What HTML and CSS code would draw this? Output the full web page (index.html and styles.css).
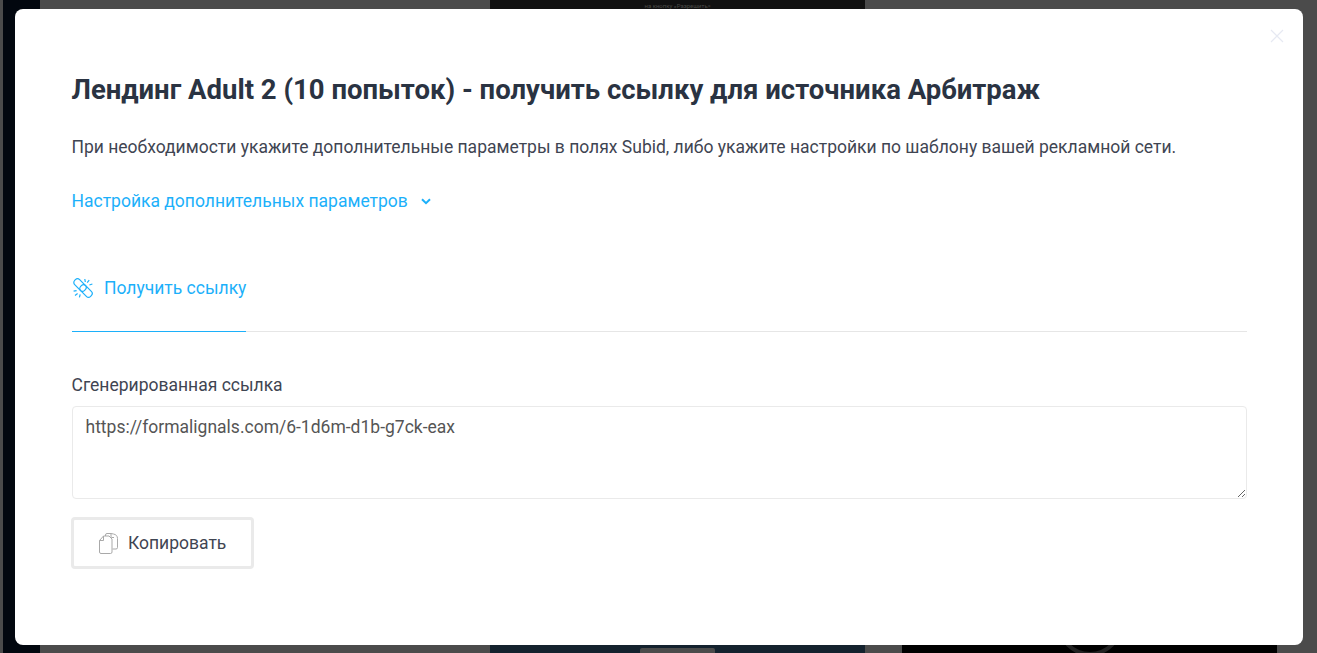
FILE: index.html
```html
<!DOCTYPE html>
<html lang="ru">
<head>
  <meta charset="UTF-8">
  <meta name="viewport" content="width=device-width, initial-scale=1.0">
  <title>Получить ссылку</title>

  <link rel="stylesheet" href="styles.css">
</head>

<body>
  <!-- Page behind the modal, only its edges are visible -->
  <div class="backdrop">
    <div class="backdrop-col col-edge"></div>
    <div class="backdrop-col col-dark"></div>
    <div class="backdrop-col col-gray"></div>
    <div class="backdrop-col col-center">
      <span class="center-caption">на кнопку «Разрешить»</span>
      <span class="center-pill"></span>
    </div>
    <div class="backdrop-col col-gap"></div>
    <div class="backdrop-col col-right">
      <span class="right-ring"></span>
    </div>
    <div class="backdrop-col col-end"></div>
  </div>

  <div class="modal-wrapper">
    <div class="modal">
      <button class="modal-close" aria-label="Закрыть">
        <svg width="14" height="14" viewBox="0 0 14 14"><path d="M1 1l12 12M13 1L1 13" fill="none" stroke="#e6e9f2" stroke-width="1.2"/></svg>
      </button>

      <h2 class="modal-title">Лендинг Adult 2 (10 попыток) - получить ссылку для источника Арбитраж</h2>
      <p class="modal-text">При необходимости укажите дополнительные параметры в полях Subid, либо укажите настройки по шаблону вашей рекламной сети.</p>

      <a class="params-toggle" href="#">
        Настройка дополнительных параметров
        <svg width="10" height="7" viewBox="0 0 10 7"><path d="M1 1.200l4 4 4-4" fill="none" stroke="#1cb0fa" stroke-width="2"/></svg>
      </a>

      <div class="tabs">
        <a class="tab tab-active" href="#">
          <svg width="22" height="22" viewBox="0 0 22 22" fill="none" stroke="#1cb0fa" stroke-width="1.2">
            <rect x="1" y="4.500" width="14" height="7" rx="3" transform="rotate(45 8 8)"/>
            <rect x="7" y="10.500" width="14" height="7" rx="3" transform="rotate(45 14 14)"/>
            <path d="M12.800 2l.5 3M17.200 3.200l-2 2.500M20.400 7l-3 1M1.600 14.200l3-.6M3 18.400l2.600-2M7.400 20.400l.8-3"/>
          </svg>
          Получить ссылку
        </a>
      </div>

      <label class="field-label" for="link">Сгенерированная ссылка</label>
      <textarea class="field-input" id="link">https://formalignals.com/6-1d6m-d1b-g7ck-eax</textarea>

      <button class="copy-button">
        <svg width="19" height="21" viewBox="0 0 19 21" fill="none" stroke="#a9a9a9" stroke-width="1">
          <path d="M.500 7.500l4-4.500h5.500l3 3v13a1.500 1.500 0 0 1-1.500 1.500H2a1.500 1.500 0 0 1-1.500-1.500z"/>
          <path d="M4.500 3v4.500h-4"/>
          <path d="M6.500 3V2A1.500 1.500 0 0 1 8 .500h4l2.500.500c2.500.500 4 2 4 4.500v9a1.500 1.500 0 0 1-1.500 1.500h-3.500"/>
          <path d="M12 1v2.500a1 1 0 0 0 1 1h2"/>
        </svg>
        Копировать
      </button>
    </div>
  </div>
</body>
</html>
```

FILE: styles.css
```css
* {
  box-sizing: border-box;
  margin: 0;
  padding: 0;
}

html, body {
  height: 100%;
  overflow: hidden;
}

body {
  font-family: Roboto, "Liberation Sans", sans-serif;
  color: #2a3342;
  background: #4b4b4b;
}

/* Page behind the modal */
.backdrop {
  position: fixed;
  inset: 0;
  display: flex;
}

.backdrop-col {
  position: relative;
  flex: none;
  height: 100%;
  overflow: hidden;
}

.col-edge {
  width: 3px;
  background: #4b4b4b;
}

.col-dark {
  width: 37px;
  background: #02070f;
}

.col-gray {
  width: 450px;
  background: #4b4b4b;
}

.col-center {
  width: 375px;
  background: linear-gradient(to bottom, #111 0, #111 50%, #14222e 50%);
  text-align: center;
  line-height: 6px;
}

.center-caption {
  font-size: 6px;
  color: #4a4a46;
}

.center-pill {
  position: absolute;
  left: 150px;
  top: 648px;
  width: 75px;
  height: 12px;
  border-radius: 2px;
  background: #4b4b4b;
}

.col-gap {
  width: 37px;
  background: #4b4b4b;
}

.col-right {
  width: 375px;
  background: linear-gradient(to bottom, #4b4b4b 0, #4b4b4b 50%, #000 50%);
}

.right-ring {
  position: absolute;
  left: 155px;
  top: 590px;
  width: 66px;
  height: 66px;
  border: 4px solid #222;
  border-radius: 50%;
}

.col-end {
  flex: 1;
  background: #4b4b4b;
}

/* Modal */
.modal-wrapper {
  position: fixed;
  inset: 0;
  padding: 9px 14px 8px 15px;
}

.modal {
  position: relative;
  height: 100%;
  background: #fff;
  border-radius: 8px;
  padding: 62px 56px 0 56.5px;
}

.modal-close {
  position: absolute;
  top: 20px;
  right: 19px;
  width: 14px;
  height: 14px;
  border: 0;
  background: none;
  display: block;
}

.modal-title {
  font-size: 27.5px;
  line-height: 37px;
  font-weight: 700;
  color: #2a3342;
  margin-bottom: 27px;
}

.modal-text {
  font-size: 17.5px;
  line-height: 24px;
  color: #3f4552;
  margin-bottom: 30px;
}

.params-toggle {
  display: inline-flex;
  align-items: center;
  gap: 13px;
  font-size: 17.5px;
  line-height: 24px;
  color: #1cb0fa;
  text-decoration: none;
}

.tabs {
  display: flex;
  height: 85px;
  margin-top: 34px;
  border-bottom: 1px solid #e6e6e6;
}

.tab {
  display: flex;
  align-items: center;
  gap: 10.5px;
  height: 85px;
  padding-bottom: 2px;
  font-size: 17.5px;
  color: #1cb0fa;
  text-decoration: none;
  border-bottom: 1px solid #1cb0fa;
}

.field-label {
  display: block;
  margin-top: 41px;
  font-size: 17.5px;
  line-height: 24px;
  color: #3f4552;
  margin-bottom: 9px;
}

.field-input {
  display: block;
  width: 100%;
  height: 93px;
  padding: 8px 13px;
  border: 1px solid #eaeaea;
  border-radius: 4px;
  font-family: inherit;
  font-size: 17.5px;
  line-height: 24px;
  color: #555;
  outline: none;
}

.copy-button {
  display: flex;
  align-items: center;
  gap: 10px;
  width: 182.5px;
  height: 52px;
  margin-top: 18px;
  margin-left: -0.5px;
  padding-left: 25px;
  background: #fff;
  border: 3px solid #eaeaea;
  border-radius: 4px;
  font-family: inherit;
  font-size: 17.5px;
  color: #3f4552;
}
```
